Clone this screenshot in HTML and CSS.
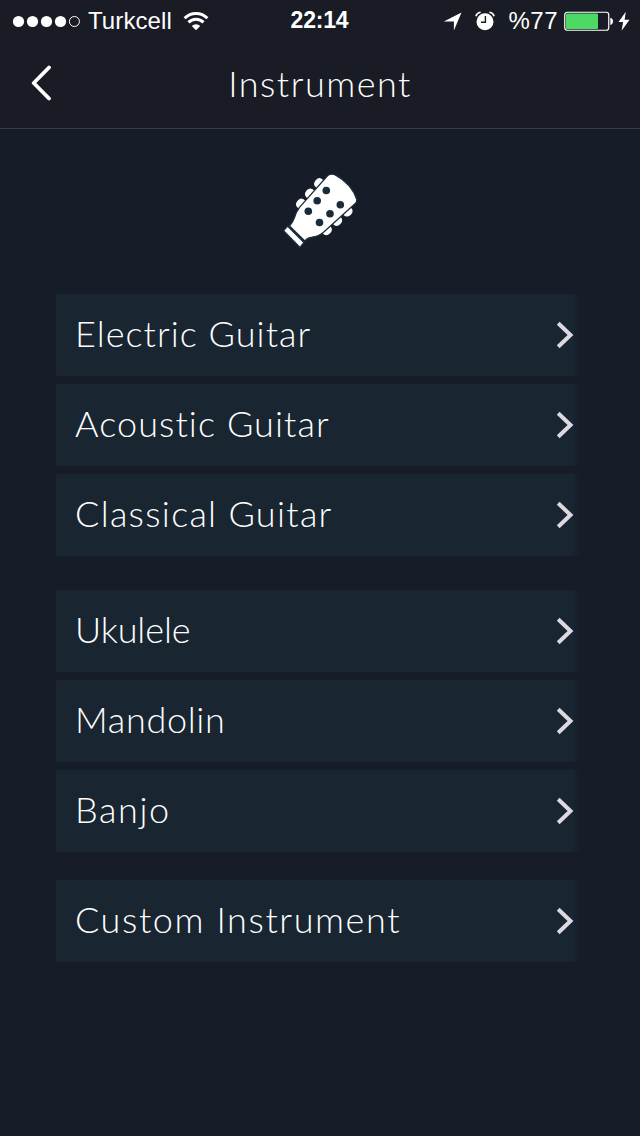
FILE: index.html
```html
<!DOCTYPE html>
<html lang="en">
<head>
    <meta charset="UTF-8">
    <meta name="viewport" content="width=device-width, initial-scale=1.0">
    <title>Instrument</title>
    <link rel="stylesheet" href="styles.css">
</head>
<body>
    <header class="header">
        <div class="status-bar">
            <div class="status-left">
                <svg class="signal" width="68" height="14" viewBox="0 0 68 14">
                    <g fill="#fff">
                        <circle cx="6.500" cy="7.500" r="5.600"/>
                        <circle cx="20.500" cy="7.500" r="5.600"/>
                        <circle cx="34.500" cy="7.500" r="5.600"/>
                        <circle cx="48.500" cy="7.500" r="5.600"/>
                    </g>
                    <circle cx="62.400" cy="7.500" r="5" fill="none" stroke="#fff" stroke-width="1"/>
                </svg>
                <span class="carrier">Turkcell</span>
                <svg class="wifi" width="26" height="20" viewBox="0 0 26 20">
                    <g fill="none" stroke="#fff" stroke-width="3">
                        <path d="M1.600 7.200a16 16 0 0 1 22.800 0"/>
                        <path d="M5.500 11.400a10.500 10.500 0 0 1 15 0"/>
                    </g>
                    <path d="M8.800 15a6 6 0 0 1 8.400 0L13 19.300z" fill="#fff"/>
                </svg>
            </div>
            <span class="time">22:14</span>
            <div class="status-right">
                <svg class="location" width="20" height="20" viewBox="0 0 20 20">
                    <path d="M18.500 1.500L10.900 19.500V10.400H.8z" fill="#fff"/>
                </svg>
                <svg class="alarm" width="20" height="20" viewBox="0 0 20 20">
                    <circle cx="10" cy="10.800" r="8.500" fill="#fff"/>
                    <path d="M.9 5.200Q1.800 1.800 5.600 1.200M19.100 5.200Q18.200 1.800 14.400 1.200" fill="none" stroke="#fff" stroke-width="1.600"/>
                    <path d="M10.400 5v6.200H6" fill="none" stroke="#191c24" stroke-width="1.400"/>
                </svg>
                <span class="percent">%77</span>
                <svg class="battery" width="50" height="20" viewBox="0 0 50 20">
                    <rect x=".75" y="1.250" width="44" height="18" rx="2.500" fill="none" stroke="#fff" stroke-width="1.200"/>
                    <rect x="2" y="2.500" width="32" height="15.500" rx="1" fill="#4cd964"/>
                    <path d="M46.300 6.700q2.700 .6 2.700 3.600t-2.700 3.600z" fill="#fff"/>
                </svg>
                <svg class="bolt" width="12" height="20" viewBox="0 0 12 20">
                    <path d="M7.800 .8L.5 11.100h4.600L3.600 19.800 11.500 8.700H6.600z" fill="#fff"/>
                </svg>
            </div>
        </div>
        <div class="nav-bar">
            <a class="back" href="#" aria-label="Back">
                <svg width="20" height="36" viewBox="0 0 20 36">
                    <path d="M18 2.500L2.700 18l15.300 15.500" fill="none" stroke="#fff" stroke-width="3.800" stroke-linecap="round" stroke-linejoin="round"/>
                </svg>
            </a>
            <h1 class="title">Instrument</h1>
        </div>
    </header>

    <main class="content">
        <svg class="headstock" width="100" height="100" viewBox="0 0 100 100">
            <!-- tuning pegs -->
            <g fill="#fff">
                <path transform="translate(31.300 44) rotate(-48)" d="M-5.200 1.500V0q0-5 5.200-5t5.200 5v1.500z"/>
                <path transform="translate(40.300 33.800) rotate(-48)" d="M-5.200 1.500V0q0-5 5.200-5t5.200 5v1.500z"/>
                <path transform="translate(49.400 23.500) rotate(-48)" d="M-5.200 1.500V0q0-5 5.200-5t5.200 5v1.500z"/>
                <path transform="translate(56.500 69.800) rotate(138)" d="M-5.200 1.500V0q0-5 5.200-5t5.200 5v1.500z"/>
                <path transform="translate(66.800 60.600) rotate(138)" d="M-5.200 1.500V0q0-5 5.200-5t5.200 5v1.500z"/>
                <path transform="translate(77.200 51.200) rotate(138)" d="M-5.200 1.500V0q0-5 5.200-5t5.200 5v1.500z"/>
            </g>
            <g fill="#fff" stroke="#1c2d3c" stroke-width="1.300">
                <path d="M57.500 15.800Q61 12.800 66 15.300C76 20.500 84 30 86.800 39.500Q87 42 85 43.800L53.500 72.200Q49 76.200 42 77.200Q37.500 77.700 34.800 81L19.500 66Q23 62 24.500 57.500Q26 52 29.500 47.300z"/>
                <path d="M17.500 66L34 82.500 30 87.500 13.500 70.800z"/>
            </g>
            <g fill="#1a2b39">
                <circle cx="38.300" cy="51.300" r="3.800"/>
                <circle cx="47.200" cy="40.800" r="3.800"/>
                <circle cx="56.300" cy="30.500" r="3.800"/>
                <circle cx="49.500" cy="62.500" r="3.800"/>
                <circle cx="60" cy="53.700" r="3.800"/>
                <circle cx="70.300" cy="44.700" r="3.800"/>
            </g>
        </svg>

        <ul class="group">
            <li class="row"><span class="label electric">Electric Guitar</span><svg class="chevron" width="20" height="30" viewBox="0 0 20 30"><path d="M3.200 3.200L15.500 15 3.200 26.800"/></svg></li>
            <li class="row"><span class="label acoustic">Acoustic Guitar</span><svg class="chevron" width="20" height="30" viewBox="0 0 20 30"><path d="M3.200 3.200L15.500 15 3.200 26.800"/></svg></li>
            <li class="row"><span class="label classical">Classical Guitar</span><svg class="chevron" width="20" height="30" viewBox="0 0 20 30"><path d="M3.200 3.200L15.500 15 3.200 26.800"/></svg></li>
        </ul>
        <ul class="group">
            <li class="row"><span class="label ukulele">Ukulele</span><svg class="chevron" width="20" height="30" viewBox="0 0 20 30"><path d="M3.200 3.200L15.500 15 3.200 26.800"/></svg></li>
            <li class="row"><span class="label mandolin">Mandolin</span><svg class="chevron" width="20" height="30" viewBox="0 0 20 30"><path d="M3.200 3.200L15.500 15 3.200 26.800"/></svg></li>
            <li class="row"><span class="label banjo">Banjo</span><svg class="chevron" width="20" height="30" viewBox="0 0 20 30"><path d="M3.200 3.200L15.500 15 3.200 26.800"/></svg></li>
        </ul>
        <ul class="group group-custom">
            <li class="row"><span class="label custom">Custom Instrument</span><svg class="chevron" width="20" height="30" viewBox="0 0 20 30"><path d="M3.200 3.200L15.500 15 3.200 26.800"/></svg></li>
        </ul>
    </main>
</body>
</html>
```
FILE: styles.css
```css
* {
    box-sizing: border-box;
}
body {
    margin: 0;
    min-height: 1136px;
    background: #161d28;
    color: #fff;
    font-family: Lato, "Open Sans", sans-serif;
    font-weight: 300;
}
svg {
    display: block;
    flex: none;
}
.header {
    height: 129px;
    background: #191c24;
    border-bottom: 1px solid #343b49;
}
.status-bar {
    display: grid;
    grid-template-columns: 1fr auto 1fr;
    align-items: center;
    height: 41px;
    padding: 0 10px 0 12px;
    font-family: "Liberation Sans", Arial, sans-serif;
    font-size: 24px;
    font-weight: 400;
    line-height: 41px;
}
.status-left,
.status-right {
    display: flex;
    align-items: center;
}
.status-right {
    justify-content: flex-end;
}
.carrier {
    margin-left: 8px;
    letter-spacing: 0.1px;
}
.wifi {
    margin-left: 11px;
}
.time {
    font-weight: 700;
    font-size: 23px;
    letter-spacing: -0.2px;
    padding-right: 3px;
}
.alarm {
    margin-left: 12px;
}
.percent {
    margin-left: 13px;
    letter-spacing: 0.5px;
}
.battery {
    margin-left: 6px;
}
.bolt {
    margin-left: 4px;
}
.nav-bar {
    display: grid;
    grid-template-columns: 72px 1fr 72px;
    align-items: center;
    height: 87px;
}
.back {
    padding: 0 0 4px 31px;
}
.title {
    margin: 0;
    padding-bottom: 3px;
    font-size: 36px;
    font-weight: 300;
    line-height: 44px;
    letter-spacing: 1.5px;
    text-align: center;
}
.content {
    display: flex;
    flex-direction: column;
    padding: 31px 60px 0 56px;
}
.headstock {
    margin-left: 214px;
}
.group {
    display: flex;
    flex-direction: column;
    gap: 8px;
    margin: 34px 0 0;
    padding: 0;
    list-style: none;
}
.group-custom {
    margin-top: 28px;
}
.row {
    display: flex;
    align-items: center;
    justify-content: space-between;
    height: 82px;
    padding: 0 5px 0 19px;
    background: linear-gradient(to right, #192632 515px, #161d28 524px);
}
.label {
    padding-bottom: 4px;
    font-size: 36px;
    line-height: 44px;
    white-space: nowrap;
}
.electric {
    letter-spacing: 1.05px;
}
.acoustic {
    letter-spacing: 1.1px;
}
.classical {
    letter-spacing: 1.3px;
}
.ukulele {
    letter-spacing: -0.1px;
}
.mandolin {
    letter-spacing: 0.7px;
}
.banjo {
    letter-spacing: 1.6px;
}
.custom {
    letter-spacing: 1.6px;
}
.chevron path {
    fill: none;
    stroke: #ddd9e0;
    stroke-width: 4;
}
```
